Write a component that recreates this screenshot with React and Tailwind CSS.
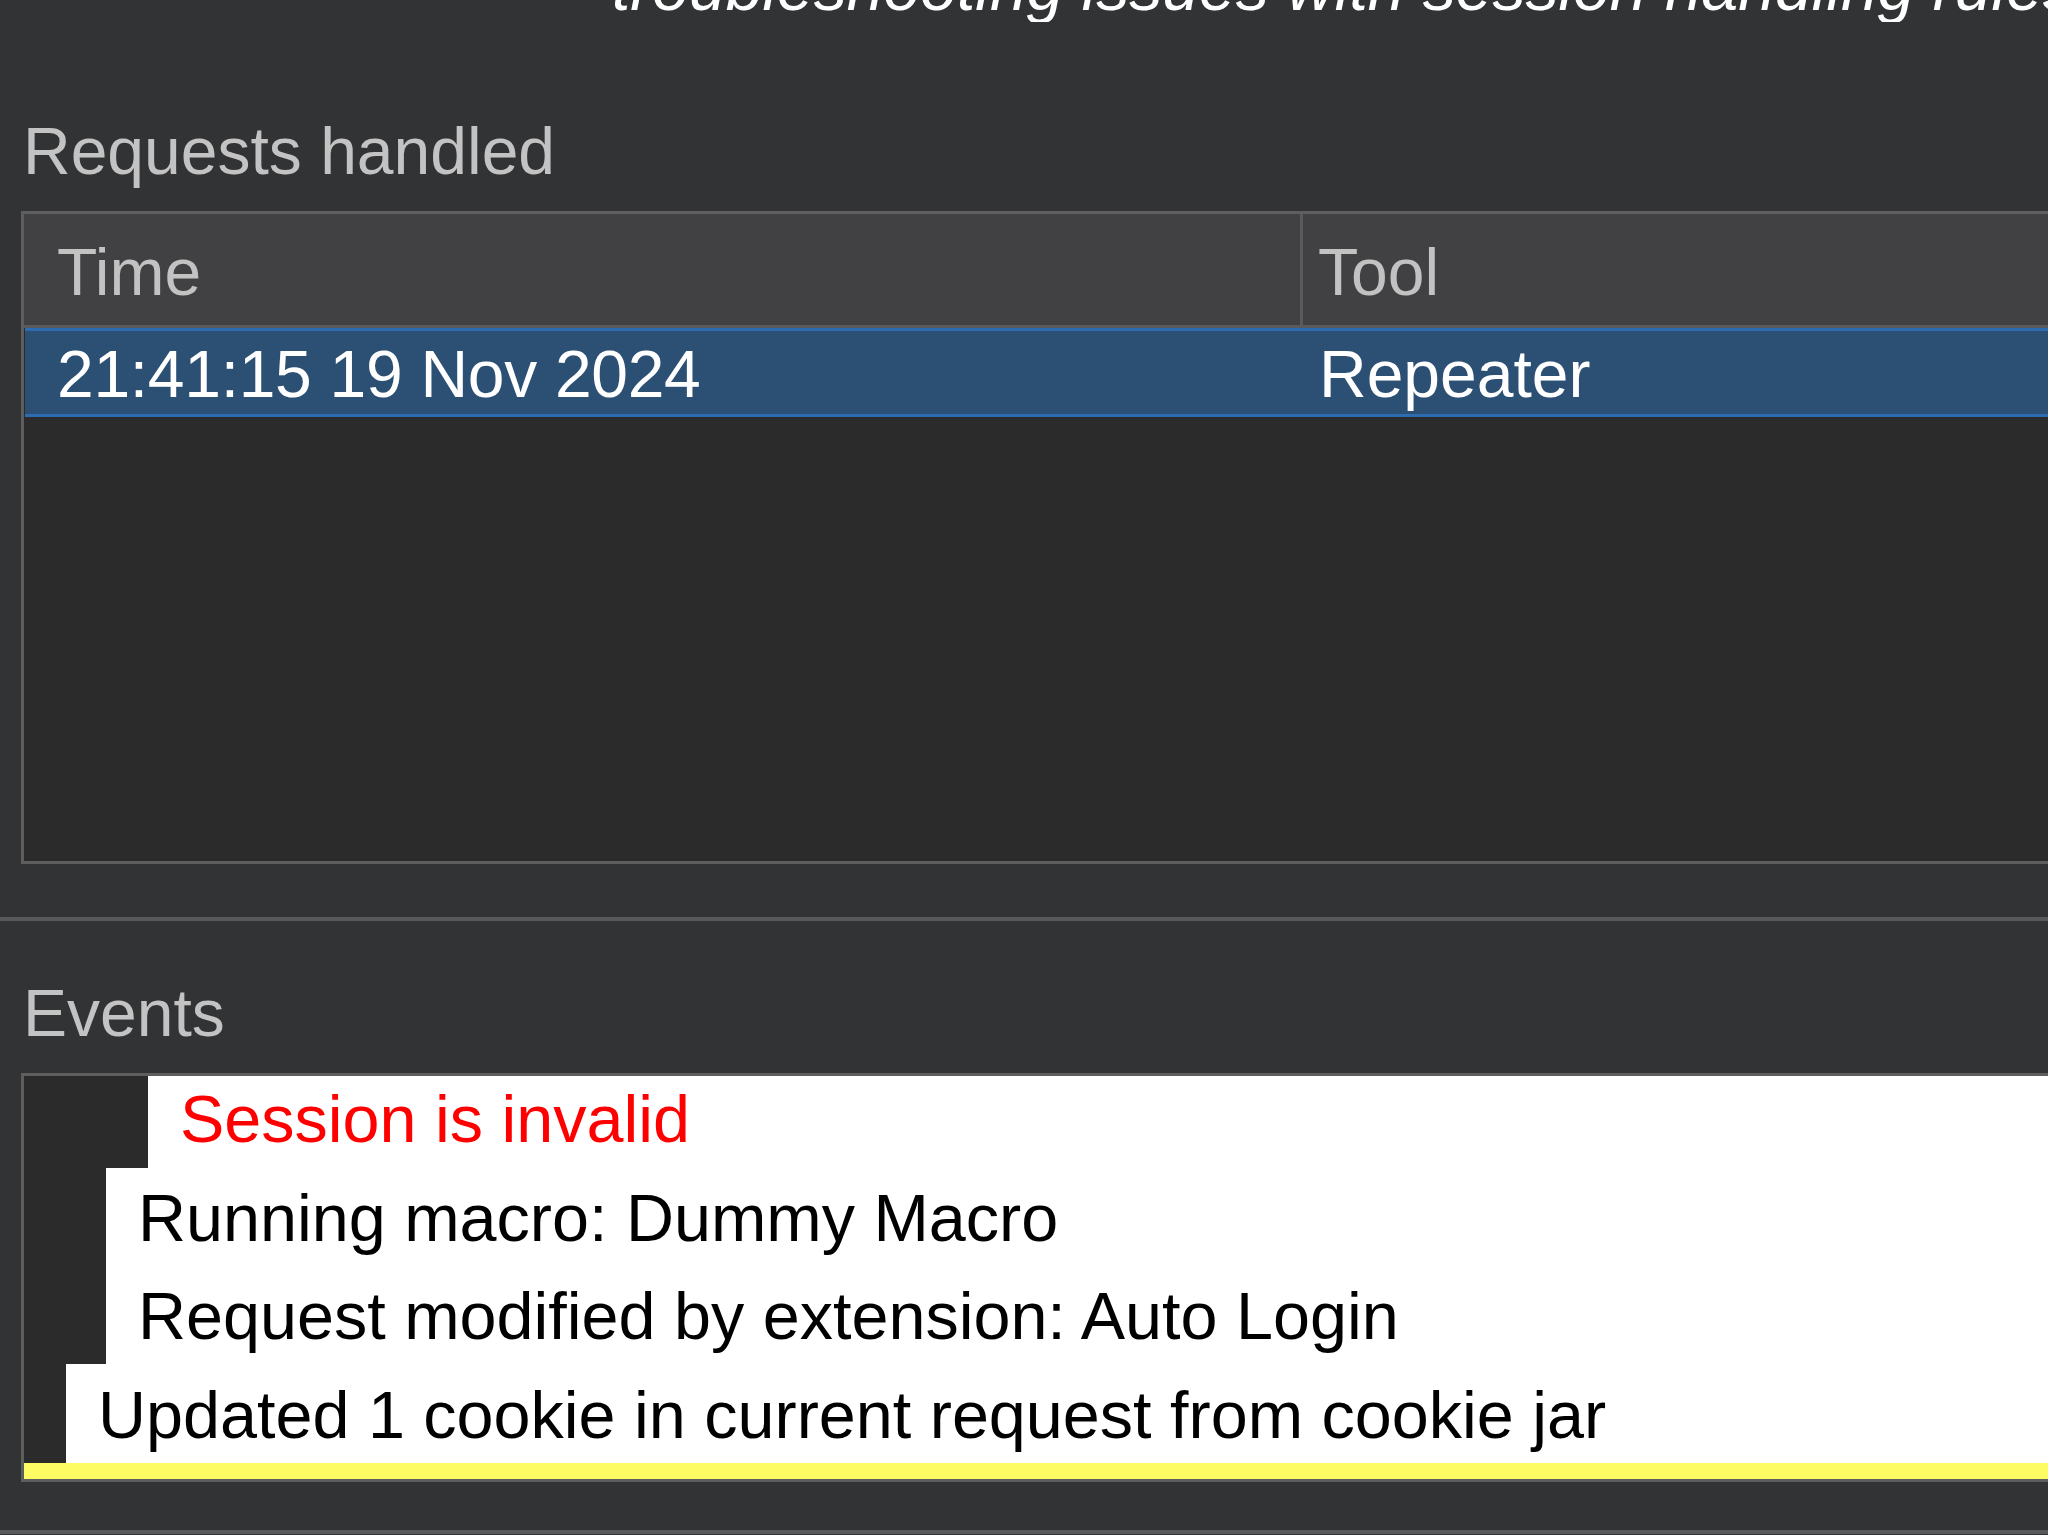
import React from 'react';

const events = [
  { text: 'Session is invalid', indent: 'ml-[124px]', height: 'h-[92px] pb-[6px]', color: 'text-[#ff0000]' },
  { text: 'Running macro: Dummy Macro', indent: 'ml-[82px]', height: 'h-[98px] pt-[2px]', color: 'text-black' },
  { text: 'Request modified by extension: Auto Login', indent: 'ml-[82px]', height: 'h-[98px] pt-[2px]', color: 'text-black' },
  { text: 'Updated 1 cookie in current request from cookie jar', indent: 'ml-[42px]', height: 'h-[99px] pt-[2px]', color: 'text-black' },
];

const App = () => {
  return (
    <div
      className="w-[2048px] h-[1535px] overflow-hidden bg-[#323335] text-[66px] leading-[66px]"
      style={{ fontFamily: '"Liberation Sans", Arial, sans-serif' }}
    >
      {/* cut-off description line */}
      <div className="h-[22px] overflow-hidden">
        <p className="-mt-[46px] pl-[612px] italic text-white whitespace-nowrap">
          troubleshooting issues with session handling rules.
        </p>
      </div>

      {/* Requests handled */}
      <div className="pl-[23px] mt-[96px] text-[#c3c3c3] whitespace-nowrap">Requests handled</div>

      <div className="ml-[21px] mt-[27px] border-[3px] border-r-0 border-[#5e5e5f] bg-[#2b2b2b] h-[653px] flex flex-col">
        <div className="flex h-[114px] bg-[#414143] border-b-[3px] border-[#5a5a5b] text-[#c2c2c2]">
          <div className="w-[1279px] border-r-[3px] border-[#5a5a5b] flex items-center pl-[33px] pt-[4px]">Time</div>
          <div className="flex-1 flex items-center pl-[15px] pt-[4px]">Tool</div>
        </div>
        <div className="flex h-[89px] bg-[#2c4f74] border-y-[3px] border-[#2d6cb3] text-white ml-[1px]">
          <div className="w-[1281px] flex items-center pl-[32px] pt-[3px] tracking-[-0.3px]">21:41:15 19 Nov 2024</div>
          <div className="flex-1 flex items-center pl-[13px] pt-[3px]">Repeater</div>
        </div>
      </div>

      <div className="mt-[53px] h-[4px] bg-[#58595a]" />

      {/* Events */}
      <div className="pl-[23px] mt-[59px] text-[#c3c3c3] whitespace-nowrap">Events</div>

      <div className="ml-[21px] mt-[27px] border-[3px] border-r-0 border-[#5e5e5f] bg-[#2b2b2b] flex flex-col text-[66.5px]">
        {events.map((e) => (
          <div key={e.text} className={`${e.indent} ${e.height} bg-white flex items-center pl-[32px] whitespace-nowrap`}>
            <span className={e.color}>{e.text}</span>
          </div>
        ))}
        <div className="h-[16px] bg-[#fdfd63]" />
      </div>

      <div className="mt-[48px] h-[4px] bg-[#58595a]" />
    </div>
  );
};

export default App;
